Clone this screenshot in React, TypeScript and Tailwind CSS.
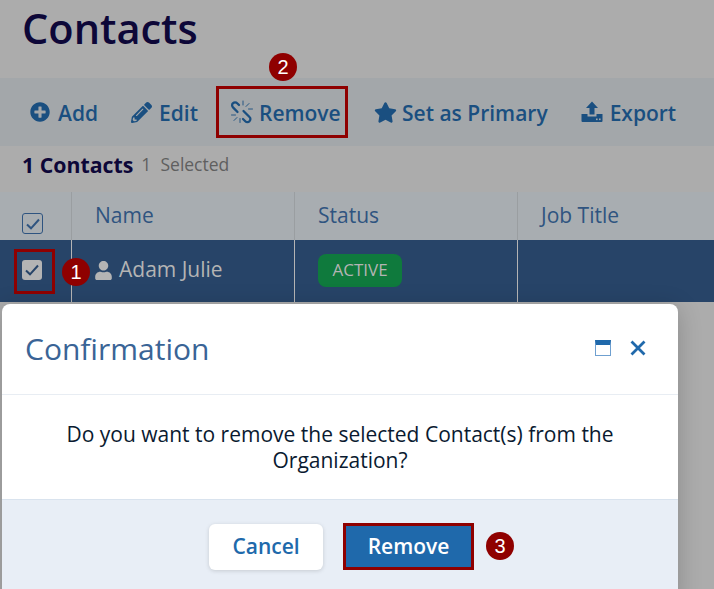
import { FaPlusCircle, FaPencilAlt, FaStar, FaUser } from "react-icons/fa";

const UnlinkIcon = () => (
  <svg width="24" height="24" viewBox="0 0 24 24" fill="none" stroke="#1a4f80" strokeLinecap="round">
    <path d="M9 5 7.2 3.2a2.9 2.9 0 0 0-4.2 0 2.9 2.9 0 0 0 0 4.2L7.5 12" strokeWidth="2.3" />
    <path d="M13.5 11l6 6a2.9 2.9 0 0 1 0 4.2 2.9 2.9 0 0 1-4.2 0L13 19" strokeWidth="2.3" />
    <path d="M13 1v4M19 3.5l-3 3M22.5 9h-4M1.5 15h4M4 20.5l3-3M10 22.5v-4" strokeWidth="0.9" />
  </svg>
);

const ExportIcon = () => (
  <svg width="22" height="22" viewBox="0 0 22 22" fill="#1a4f80">
    <path d="M11 0.5 17 7h-3.5v6.5h-5V7H5z" />
    <path d="M0.5 13h6v2.5h9V13h6v7a1 1 0 0 1-1 1h-19a1 1 0 0 1-1-1z" />
    <rect x="15" y="17.5" width="1.6" height="1.6" fill="#a3a7aa" />
    <rect x="18" y="17.5" width="1.6" height="1.6" fill="#a3a7aa" />
  </svg>
);

const Check = () => (
  <svg width="14" height="12" viewBox="0 0 14 12" fill="none" stroke="currentColor" strokeWidth="2">
    <path d="M1 6.5 5 10.3 13 1.5" />
  </svg>
);

const Close = () => (
  <svg width="16" height="16" viewBox="0 0 16 16" fill="none" stroke="#2069ab" strokeWidth="2.8">
    <path d="M1.5 1.5 14.5 14.5M14.5 1.5 1.5 14.5" />
  </svg>
);

const Badge = ({ n, className }: { n: number; className: string }) => (
  <div className={`absolute flex h-7 w-7 items-center justify-center rounded-full bg-[#8f0000] font-['Liberation_Sans',sans-serif] text-[20px] text-white ${className}`}>
    {n}
  </div>
);

export default function App() {
  return (
    <div className="relative h-[589px] w-[714px] overflow-hidden bg-[#acacac] font-['Open_Sans',sans-serif]">
      <h1 className="h-[78px] pl-[22px] text-[41.5px] font-semibold leading-[56px] text-[#0d0738]">Contacts</h1>

      <div className="flex h-[68px] items-center bg-[#a3a7aa] pl-[30px] text-[21px] font-semibold text-[#1a4f80]">
        <div className="flex items-center gap-[8px]"><FaPlusCircle size={20} /><span className="pt-[3px]">Add</span></div>
        <div className="ml-[33px] flex items-center gap-[7px]"><FaPencilAlt size={21} /><span className="pt-[3px]">Edit</span></div>
        <div className="ml-[18px] flex h-[52px] w-[132px] items-center gap-[5px] border-[3px] border-[#8f0000] pl-[11px]"><UnlinkIcon /><span className="pt-[3px]">Remove</span></div>
        <div className="ml-[26px] flex items-center gap-[5px]"><FaStar size={23} /><span className="pt-[3px]">Set as Primary</span></div>
        <div className="ml-[33px] flex items-center gap-[7px]"><ExportIcon /><span className="pt-[3px]">Export</span></div>
      </div>

      <div className="flex h-[46px] items-center gap-[8px] pb-[9px] pl-[22px]">
        <span className="text-[21.3px] font-bold text-[#0d0738]">1 Contacts</span>
        <span className="text-[17.5px] text-[#5f5f5f]">1&nbsp; Selected</span>
      </div>

      <div className="grid h-[48px] grid-cols-[72px_223px_223px_1fr] bg-[#a8adb1] text-[21px] text-[#2f5480]">
        <div className="flex items-end border-r border-[#9a9ea1] pb-[6px] pl-[22px]">
          <div className="flex h-[21px] w-[21px] items-center justify-center rounded-[3px] border border-[#2f5480]"><Check /></div>
        </div>
        <div className="flex items-center border-r border-[#9a9ea1] pb-[1px] pl-[23px]">Name</div>
        <div className="flex items-center border-r border-[#9a9ea1] pb-[1px] pl-[23px]">Status</div>
        <div className="flex items-center pb-[1px] pl-[23px]">Job Title</div>
      </div>

      <div className="grid h-[62px] grid-cols-[72px_223px_223px_1fr] bg-[#274468] text-[21px] text-[#b4b4b4]">
        <div className="flex items-center border-r border-[#b4b4b4] pb-[2px] pl-[22px]">
          <div className="flex h-[20px] w-[20px] items-center justify-center rounded-[3px] bg-[#b4b4b4] text-[#274468]"><Check /></div>
        </div>
        <div className="flex items-center gap-[6px] border-r border-[#b4b4b4] pb-[2px] pl-[22px]">
          <FaUser size={19} className="text-[#b4b4b4]" />
          <span>Adam Julie</span>
        </div>
        <div className="flex items-center border-r border-[#b4b4b4] pb-[2px] pl-[23px]">
          <div className="flex h-[33px] w-[84px] items-center justify-center rounded-[8px] bg-[#0f7a3d] text-[17px] text-[#b4b4b4]">ACTIVE</div>
        </div>
        <div />
      </div>

      <div className="absolute left-[14px] top-[249px] h-[45px] w-[41px] border-[3px] border-[#8f0000]" />
      <Badge n={1} className="left-[62px] top-[258px]" />
      <Badge n={2} className="left-[269px] top-[53px]" />

      <div className="absolute left-[2px] top-[304px] flex h-[300px] w-[676px] flex-col rounded-[8px] bg-white shadow-[0_4px_24px_rgba(0,0,0,0.2)]">
        <div className="flex h-[91px] items-center justify-between border-b border-[#e8edf3] pb-[2px] pl-[23px] pr-[32px]">
          <span className="text-[30px] text-[#3a6496]">Confirmation</span>
          <div className="flex items-center gap-[19px]">
            <div className="h-[16px] w-[16px] border border-[#6fa0d0] border-t-[5px] border-t-[#2069ab]" />
            <Close />
          </div>
        </div>
        <div className="flex h-[104px] items-center justify-center px-[40px] pb-[1px] text-center text-[21px] leading-[26px] text-[#0a1a30]">
          Do you want to remove the selected Contact(s) from the Organization?
        </div>
        <div className="flex flex-1 items-start justify-center gap-[20px] border-t border-[#d9e3ee] bg-[#e8eef6] pl-[3px] pt-[24px]">
          <div className="flex h-[46px] w-[114px] items-center justify-center rounded-[6px] bg-white text-[21px] font-semibold text-[#2069ab] shadow-[0_1px_4px_rgba(0,0,0,0.15)]">Cancel</div>
          <div className="-mt-[1px] flex h-[47px] w-[131px] items-center justify-center border-[3px] border-[#8f0000] bg-[#1f69ab] text-[21px] font-semibold text-white">Remove</div>
        </div>
      </div>
      <Badge n={3} className="left-[486px] top-[532px]" />
    </div>
  );
}
